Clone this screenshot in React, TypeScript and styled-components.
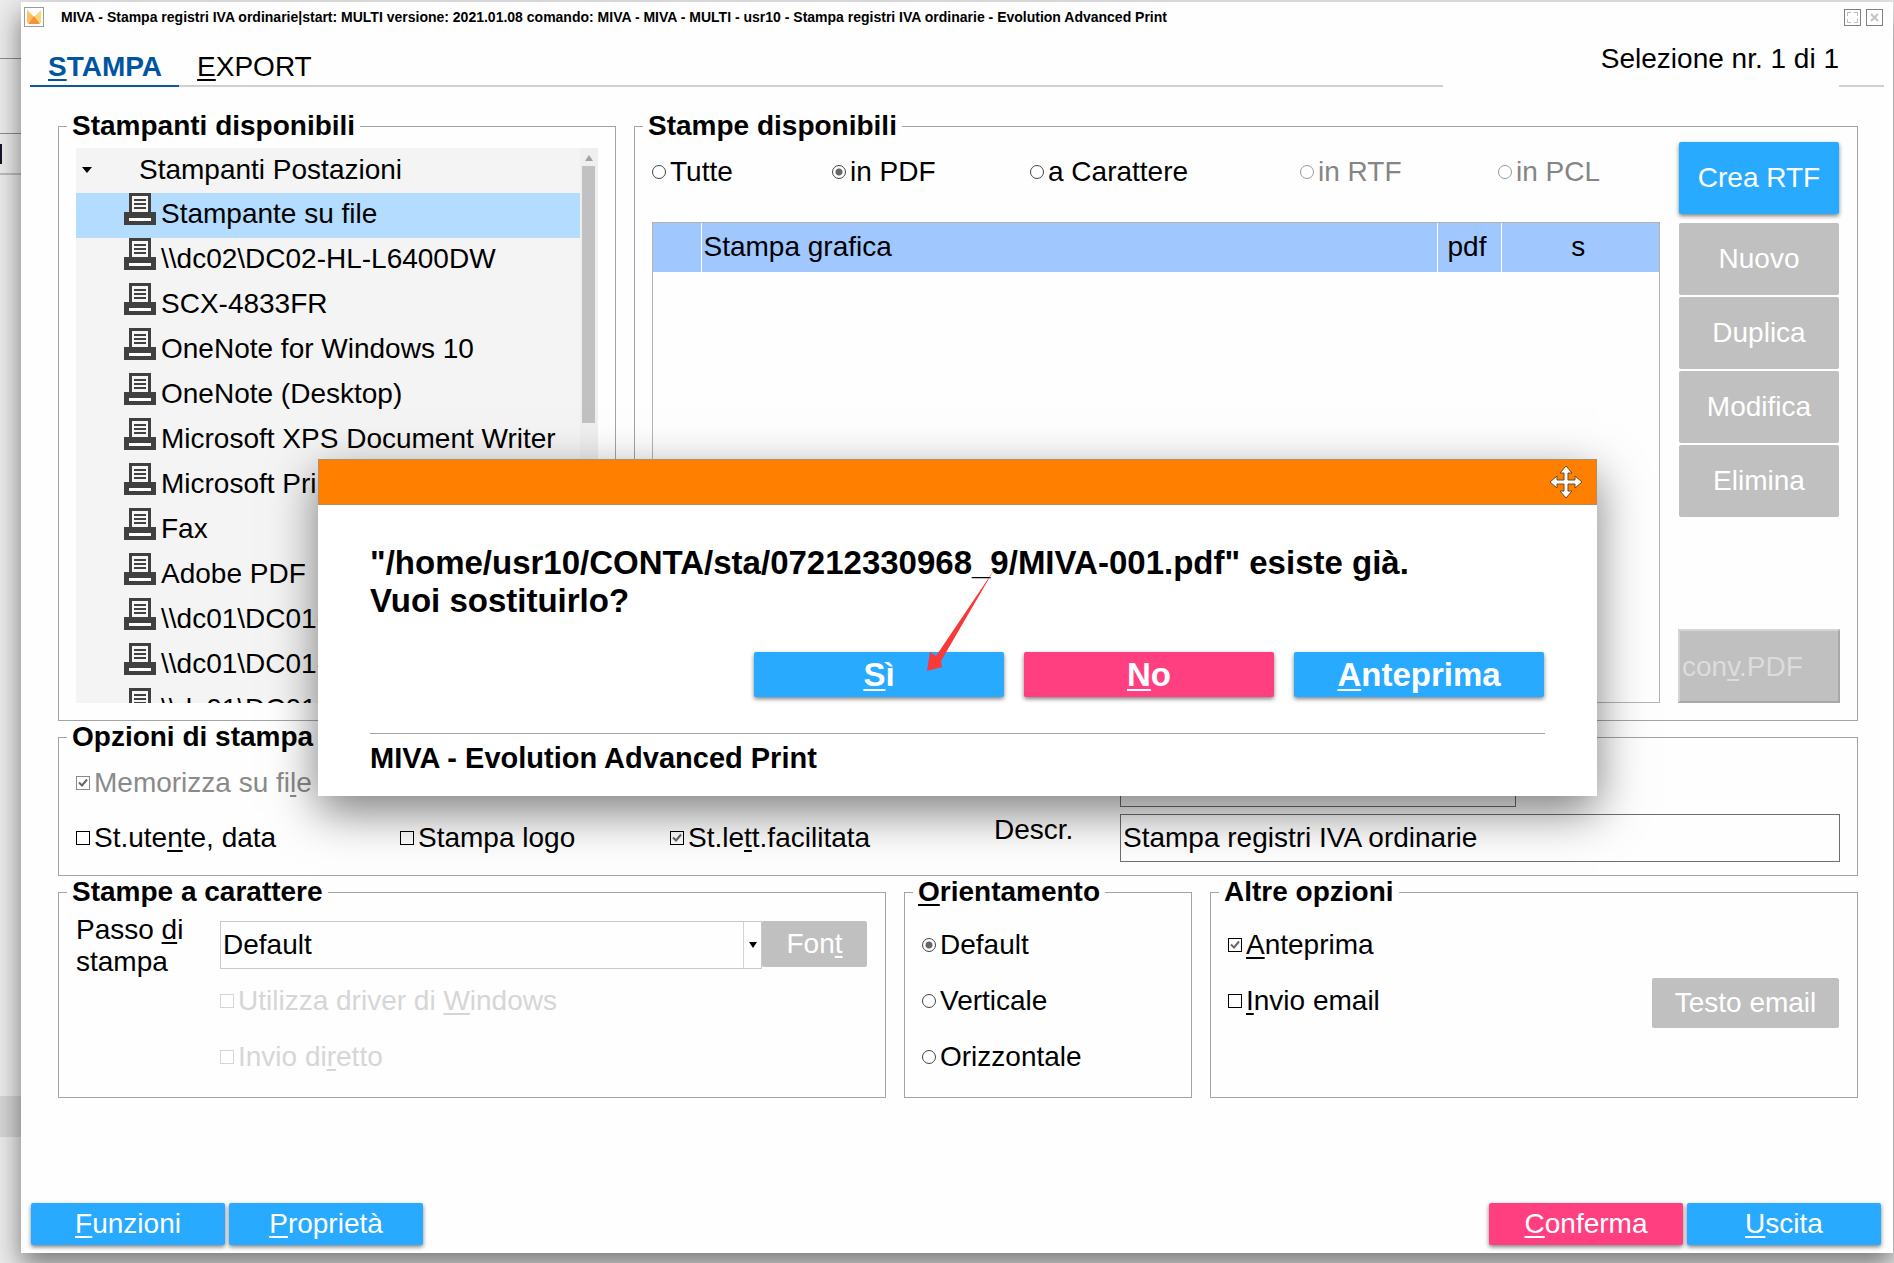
import React, { useState } from 'react';
import styled, { createGlobalStyle, css } from 'styled-components';

const BLUE = '#27aaff';
const PINK = '#ff3f7f';
const GREY = '#c0c0c0';

const GlobalStyle = createGlobalStyle`
  *, *::before, *::after { box-sizing: border-box; }
  html, body, #root { height: 100%; }
  body {
    margin: 0;
    overflow: hidden;
    background: #e9e9e9;
    color: #000;
    font: 28px/32px "Liberation Sans", Arial, sans-serif;
  }
  button, input, select { font: inherit; color: inherit; }
  u { text-decoration-skip-ink: none; text-underline-offset: 3px; text-decoration-thickness: 2px; }
`;

/* ---------- page behind the window ---------- */

const Desktop = styled.div`
  min-height: 100%;
  position: relative;
  padding: 2px 1px 10px 21px;
  display: flex;
  background:
    linear-gradient(#8c8c8c, #8c8c8c) 0 58px / 21px 1px no-repeat,
    linear-gradient(#8c8c8c, #8c8c8c) 0 133px / 21px 1px no-repeat,
    linear-gradient(#15152a, #15152a) 0 144px / 2px 20px no-repeat,
    linear-gradient(#bdbdbd, #bdbdbd) 0 173px / 21px 2px no-repeat,
    linear-gradient(#d6d6d6, #d6d6d6) 0 1096px / 21px 41px no-repeat,
    #ececec;
`;

const Window = styled.main`
  flex: 1;
  min-width: 0;
  display: flex;
  flex-direction: column;
  background: #fefefe;
  box-shadow: 0 12px 26px rgba(0, 0, 0, 0.5);
`;

const TitleBar = styled.header`
  display: flex;
  align-items: center;
  height: 30px;
  padding: 0 10px 0 3px;
  gap: 5px;
`;

const TitleText = styled.h1`
  flex: 1;
  margin: 0 0 0 12px;
  font-size: 14px;
  line-height: 16px;
  white-space: nowrap;
`;

const WindowButton = styled.button`
  width: 17px;
  height: 17px;
  padding: 0;
  border: 1px solid #808080;
  background: #fff;
  display: grid;
  place-items: center;
`;

const TabBar = styled.nav`
  display: flex;
  height: 55px;
  padding: 0 9px;
`;

const Tab = styled.a<{ $active?: boolean }>`
  padding: 19px 17px 0 18px;
  border-bottom: 2px solid ${p => (p.$active ? '#0d5c92' : '#cfd0d0')};
  color: ${p => (p.$active ? '#0055a0' : '#000')};
  font-weight: ${p => (p.$active ? 'bold' : 'normal')};
  text-decoration: none;
`;

const TabLine = styled.div<{ $width?: number }>`
  flex: ${p => (p.$width ? `0 0 ${p.$width}px` : '1')};
  border-bottom: 2px solid #cfd0d0;
`;

const Selection = styled.div`
  flex: 0 0 396px;
  padding-top: 11px;
  text-align: right;
`;

const Panels = styled.div`
  flex: 1;
  display: flex;
  flex-direction: column;
  padding: 23px 35px 0 37px;
`;

const Row = styled.div<{ $cols: string }>`
  display: grid;
  grid-template-columns: ${p => p.$cols};
  column-gap: 18px;
`;

const Group = styled.fieldset<{ $height: number }>`
  min-width: 0;
  min-height: ${p => p.$height}px;
  margin: 0;
  padding: 0 17px;
  border: 1px solid #a3a3a3;
  > legend {
    margin-left: -9px;
    padding: 0 5px;
    font-weight: bold;
  }
`;

/* ---------- buttons ---------- */

const Button = styled.button<{ $tone?: string; $w?: number; $h?: number }>`
  flex: none;
  width: ${p => (p.$w ? `${p.$w}px` : '100%')};
  height: ${p => p.$h ?? 72}px;
  padding: 0;
  border: 0;
  border-radius: 2px;
  background: ${p => p.$tone ?? BLUE};
  color: #fff;
  box-shadow: 0 2px 4px rgba(0, 0, 0, 0.5);
  &:disabled {
    background: ${GREY};
    box-shadow: none;
  }
`;

const ConvButton = styled.button`
  width: 162px;
  height: 74px;
  margin: auto -1px 0;
  padding: 2px 2px 0;
  border: 2px solid;
  border-color: #d4d4d4 #a8a8a8 #a8a8a8 #d4d4d4;
  background: ${GREY};
  text-align: left;
  &:disabled { color: #dcdcdc; }
`;

/* ---------- tick boxes and radios ---------- */

const Choice = styled.label<{ $color?: string }>`
  display: flex;
  align-items: center;
  gap: 4px;
  height: 32px;
  color: ${p => p.$color ?? '#000'};
  white-space: nowrap;
`;

const tick = css`
  background: #fff url("data:image/svg+xml,%3Csvg xmlns='http://www.w3.org/2000/svg' viewBox='0 0 12 12'%3E%3Cpath d='M2 5.5 5 8.5 10 2.5' fill='none' stroke='%23666' stroke-width='2'/%3E%3C/svg%3E") center / 12px 12px no-repeat;
`;

const Mark = styled.input`
  appearance: none;
  flex: none;
  width: 14px;
  height: 14px;
  margin: 0;
  border: 1px solid currentColor;
  background: #fff;
  &[type='radio'] { border-color: #444; border-radius: 50%; }
  &[type='radio']:checked { background: radial-gradient(circle, #666 0 3px, #fff 4px); }
  &[type='radio']:disabled { border-color: #999; }
  &[type='checkbox']:checked { ${tick} }
`;

type OptionProps = {
  type: 'radio' | 'checkbox';
  name?: string;
  on?: boolean;
  off?: boolean;
  color?: string;
  children: React.ReactNode;
};

function Option({ type, name, on, off, color, children }: OptionProps) {
  return (
    <Choice $color={color}>
      <Mark type={type} name={name} defaultChecked={on} disabled={off} />
      <span>{children}</span>
    </Choice>
  );
}

/* ---------- printers tree ---------- */

const Tree = styled.div`
  display: flex;
  height: 555px;
  margin: 6px 0 0;
  background: #f4f4f4;
  overflow: hidden;
`;

const TreeList = styled.ul`
  flex: 1;
  min-width: 0;
  margin: 0;
  padding: 0;
  list-style: none;
`;

const TreeHead = styled.li`
  display: flex;
  align-items: center;
  gap: 47px;
  height: 45px;
  padding: 0 6px 2px;
`;

const TreeItem = styled.li<{ $selected?: boolean }>`
  display: flex;
  gap: 5px;
  height: 45px;
  padding-left: 48px;
  background: ${p => (p.$selected ? '#b3dcff' : 'transparent')};
  line-height: 42px;
  white-space: nowrap;
`;

const Scrollbar = styled.div`
  flex: 0 0 18px;
  padding: 7px 3px 0 2px;
  display: flex;
  flex-direction: column;
  align-items: center;
  gap: 5px;
  background: #efefef;
`;

const Thumb = styled.div`
  width: 13px;
  height: 257px;
  background: #c1c1c1;
`;

/* ---------- prints ---------- */

const Prints = styled.div`
  display: grid;
  grid-template-columns: 1fr 160px;
  column-gap: 19px;
  padding-right: 1px;
`;

const PrintFilter = styled.div`
  display: grid;
  grid-template-columns: 180fr 198fr 270fr 198fr 162fr;
  padding: 14px 0 34px;
`;

const TableFrame = styled.div`
  height: 481px;
  border: 1px solid #b4b4b4;
`;

const Table = styled.table`
  width: 100%;
  border-collapse: collapse;
  table-layout: fixed;
  td {
    height: 49px;
    padding: 0 6px 2px 2px;
    background: #a1c7ff;
    text-align: center;
  }
  td + td { border-left: 1px solid #fff; }
  td:nth-child(1) { width: 48px; }
  td:nth-child(2) { text-align: left; }
  td:nth-child(3) { width: 64px; }
  td:nth-child(4) { width: 158px; }
`;

const Actions = styled.div`
  display: flex;
  flex-direction: column;
  gap: 2px;
  height: 561px;
  > :first-child { margin-bottom: 7px; }
`;

/* ---------- option groups ---------- */

const OptionGrid = styled.div`
  display: grid;
  grid-template-columns: 324fr 270fr 324fr 126fr 720fr;
  grid-template-rows: 48px 48px;
  row-gap: 7px;
  align-items: center;
  padding-top: 6px;
`;

const FieldLabel = styled.label`
  align-self: start;
`;

const Field = styled.input<{ $short?: boolean }>`
  width: ${p => (p.$short ? '55%' : '100%')};
  height: 48px;
  padding: 0 2px;
  border: 1px solid #6e6e6e;
  border-radius: 0;
  background: transparent;
`;

const CharGrid = styled.div`
  display: grid;
  grid-template-columns: 144px 1fr 105px;
  grid-template-rows: 48px auto;
  padding: 13px 1px 0 0;
`;

const StepLabel = styled.label`
  margin-top: -7px;
  width: 120px;
`;

const SelectBox = styled.div`
  display: grid;
  grid-template-columns: 1fr 18px;
  border: 1px solid #c9c9c9;
`;

const Select = styled.select`
  appearance: none;
  grid-area: 1 / 1 / 2 / 3;
  width: 100%;
  padding: 0 2px;
  border: 0;
  background: transparent;
`;

const SelectArrow = styled.span`
  grid-area: 1 / 2 / 2 / 3;
  display: grid;
  place-items: center;
  border-left: 1px solid #d4d4d4;
  pointer-events: none;
`;

const Stack = styled.div<{ $top: number; $bottom?: number }>`
  grid-column: 2 / 4;
  display: flex;
  flex-direction: column;
  gap: 24px;
  padding: ${p => p.$top}px 0 ${p => p.$bottom ?? 0}px;
`;

const OtherOptions = styled.div`
  display: flex;
  justify-content: space-between;
  align-items: flex-end;
  padding-right: 1px;
`;

const Footer = styled.footer`
  display: flex;
  gap: 4px;
  padding: 0 12px 8px 10px;
  > :nth-child(3) { margin-left: auto; }
`;

/* ---------- confirmation dialog ---------- */

const Dialog = styled.section`
  position: absolute;
  left: 318px;
  right: 297px;
  top: 459px;
  background: #fff;
  box-shadow: 0 16px 44px rgba(0, 0, 0, 0.5);
  font-weight: bold;
`;

const DialogBar = styled.div`
  display: flex;
  justify-content: flex-end;
  align-items: center;
  height: 46px;
  padding-right: 14px;
  border: 1px solid #b58d63;
  background: #ff8000;
`;

const DialogBody = styled.div`
  padding: 39px 52px 13px;
`;

const Message = styled.p`
  margin: 0;
  font-size: 33px;
  line-height: 38px;
`;

const DialogButtons = styled.div`
  display: flex;
  justify-content: flex-end;
  gap: 20px;
  padding: 32px 1px 36px 0;
  font-size: 33px;
  button { font-weight: bold; }
`;

const DialogFoot = styled.p`
  margin: 0;
  padding: 8px 0 9px;
  border-top: 1px solid #a3a3a3;
  font-size: 29px;
`;

const Pointer = styled.svg`
  position: absolute;
  left: 608px;
  top: 110px;
  width: 70px;
  height: 104px;
  pointer-events: none;
`;

/* ---------- drawings ---------- */

const Logo = () => (
  <svg width="20" height="20" viewBox="0 0 20 20">
    <rect x=".5" y=".5" width="19" height="19" fill="#fff" stroke="#9a9a9a" />
    <path d="M3 3l7 7 7-7v13H3z" fill="#ffd37a" />
    <path d="M3 3l7 7-7 6z" fill="#ffc160" />
    <path d="M10 9l6 8H4z" fill="#f5923a" />
  </svg>
);

const PrinterSvg = styled.svg`
  flex: none;
`;

const Printer = () => (
  <PrinterSvg width="32" height="32" viewBox="0 0 32 32">
    <path d="M6.500 20V1.500h19V20" fill="#f6f6f6" stroke="#404040" strokeWidth="3" />
    <path d="M10 7h12M10 11h12M10 15h12" stroke="#404040" strokeWidth="2" />
    <path d="M0 19h32v13H0z" fill="#404040" />
    <path d="M5 25h22v3H5z" fill="#fff" />
  </PrinterSvg>
);

const Caret = ({ w = 10, up = false, color = '#000' }) => (
  <svg width={w} height="6" viewBox="0 0 10 6" preserveAspectRatio="none">
    <path d={up ? 'M0 6h10L5 0z' : 'M0 0h10L5 6z'} fill={color} />
  </svg>
);

const MoveIcon = () => (
  <svg width="32" height="32" viewBox="0 0 32 32">
    <path
      d="M16 0l6 7h-4v7h7v-4l7 6-7 6v-4h-7v7h4l-6 7-6-7h4v-7H7v4l-7-6 7-6v4h7V7h-4z"
      fill="#fff"
      stroke="#6b4a20"
      strokeWidth="1"
    />
  </svg>
);

const printers = [
  'Stampante su file',
  '\\\\dc02\\DC02-HL-L6400DW',
  'SCX-4833FR',
  'OneNote for Windows 10',
  'OneNote (Desktop)',
  'Microsoft XPS Document Writer',
  'Microsoft Print to PDF',
  'Fax',
  'Adobe PDF',
  '\\\\dc01\\DC01-',
  '\\\\dc01\\DC01-',
  '\\\\dc01\\DC01-',
];

export default function App() {
  const [descr, setDescr] = useState('Stampa registri IVA ordinarie');
  return (
    <Desktop>
      <GlobalStyle />
      <Window>
        <TitleBar>
          <Logo />
          <TitleText>
            MIVA - Stampa registri IVA ordinarie|start: MULTI versione: 2021.01.08 comando: MIVA - MIVA - MULTI - usr10 - Stampa registri IVA ordinarie - Evolution Advanced Print
          </TitleText>
          <WindowButton aria-label="Ingrandisci">
            <svg width="11" height="11" viewBox="0 0 11 11" fill="none" stroke="#bbb">
              <path d="M.5 4V.5H4M7 .5h3.500V4M10.500 7v3.500H7M4 10.500H.5V7" />
            </svg>
          </WindowButton>
          <WindowButton aria-label="Chiudi">
            <svg width="9" height="9" viewBox="0 0 9 9" stroke="#c4c4c4" strokeWidth="2">
              <path d="M1 1l7 7M8 1L1 8" />
            </svg>
          </WindowButton>
        </TitleBar>
        <TabBar>
          <Tab href="#stampa" $active><u>S</u>TAMPA</Tab>
          <Tab href="#export"><u>E</u>XPORT</Tab>
          <TabLine />
          <Selection>Selezione nr. 1 di 1</Selection>
          <TabLine $width={45} />
        </TabBar>
        <Panels>
          <Row $cols="558fr 1224fr">
            <Group $height={611}>
              <legend>Stampanti disponibili</legend>
              <Tree>
                <TreeList>
                  <TreeHead><Caret />Stampanti Postazioni</TreeHead>
                  {printers.map((name, i) => (
                    <TreeItem key={i} $selected={i === 0}>
                      <Printer />
                      {name}
                    </TreeItem>
                  ))}
                </TreeList>
                <Scrollbar>
                  <Caret w={8} up color="#a3a3a3" />
                  <Thumb />
                </Scrollbar>
              </Tree>
            </Group>
            <Group $height={611}>
              <legend>Stampe disponibili</legend>
              <Prints>
                <div>
                  <PrintFilter>
                    <Option type="radio" name="print">Tutte</Option>
                    <Option type="radio" name="print" on>in PDF</Option>
                    <Option type="radio" name="print">a Carattere</Option>
                    <Option type="radio" name="print" off color="#858585">in RTF</Option>
                    <Option type="radio" name="print" off color="#858585">in PCL</Option>
                  </PrintFilter>
                  <TableFrame>
                    <Table>
                      <tbody>
                        <tr><td /><td>Stampa grafica</td><td>pdf</td><td>s</td></tr>
                      </tbody>
                    </Table>
                  </TableFrame>
                </div>
                <Actions>
                  <Button>Crea RTF</Button>
                  <Button disabled>Nuovo</Button>
                  <Button disabled>Duplica</Button>
                  <Button disabled>Modifica</Button>
                  <Button disabled>Elimina</Button>
                  <ConvButton disabled>con<u>v</u>.PDF</ConvButton>
                </Actions>
              </Prints>
            </Group>
          </Row>
          <Group $height={155}>
            <legend>Opzioni di stampa</legend>
            <OptionGrid>
              <Option type="checkbox" on off color="#8a8a8a">Memorizza su fi<u>l</u>e</Option>
              <span />
              <span />
              <span />
              <Field $short aria-label="Nome" />
              <Option type="checkbox">St.ute<u>n</u>te, data</Option>
              <Option type="checkbox">Stampa logo</Option>
              <Option type="checkbox" on>St.le<u>t</u>t.facilitata</Option>
              <FieldLabel htmlFor="descr">Descr.</FieldLabel>
              <Field id="descr" value={descr} onChange={e => setDescr(e.target.value)} />
            </OptionGrid>
          </Group>
          <Row $cols="828fr 288fr 648fr">
            <Group $height={222}>
              <legend>Stampe a carattere</legend>
              <CharGrid>
                <StepLabel htmlFor="step">Passo <u>d</u>i stampa</StepLabel>
                <SelectBox>
                  <Select id="step"><option>Default</option></Select>
                  <SelectArrow><Caret w={8} /></SelectArrow>
                </SelectBox>
                <Button disabled $h={46}>Fon<u>t</u></Button>
                <Stack $top={16}>
                  <Option type="checkbox" off color="#d6d6d6">Utilizza driver di <u>W</u>indows</Option>
                  <Option type="checkbox" off color="#d6d6d6">Invio di<u>r</u>etto</Option>
                </Stack>
              </CharGrid>
            </Group>
            <Group $height={222}>
              <legend><u>O</u>rientamento</legend>
              <Stack $top={21}>
                <Option type="radio" name="orient" on>Default</Option>
                <Option type="radio" name="orient">Verticale</Option>
                <Option type="radio" name="orient">Orizzontale</Option>
              </Stack>
            </Group>
            <Group $height={222}>
              <legend>Altre opzioni</legend>
              <OtherOptions>
                <Stack $top={21} $bottom={11}>
                  <Option type="checkbox" on><u>A</u>nteprima</Option>
                  <Option type="checkbox"><u>I</u>nvio email</Option>
                </Stack>
                <Button disabled $w={187} $h={50}>Testo email</Button>
              </OtherOptions>
            </Group>
          </Row>
        </Panels>
        <Footer>
          <Button $w={194} $h={42}><u>F</u>unzioni</Button>
          <Button $w={194} $h={42}><u>P</u>roprietà</Button>
          <Button $w={194} $h={42} $tone={PINK}><u>C</u>onferma</Button>
          <Button $w={194} $h={42}><u>U</u>scita</Button>
        </Footer>
      </Window>
      <Dialog role="dialog" aria-label="MIVA">
        <DialogBar><MoveIcon /></DialogBar>
        <DialogBody>
          <Message>
            "/home/usr10/CONTA/sta/07212330968_9/MIVA-001.pdf" esiste già.
            <br />
            Vuoi sostituirlo?
          </Message>
          <DialogButtons>
            <Button $w={250} $h={45}><u>S</u>ì</Button>
            <Button $w={250} $h={45} $tone={PINK}><u>N</u>o</Button>
            <Button $w={250} $h={45}><u>A</u>nteprima</Button>
          </DialogButtons>
          <DialogFoot>MIVA - Evolution Advanced Print</DialogFoot>
        </DialogBody>
        <Pointer viewBox="0 0 70 104">
          <path d="M68 1L15 92l1 6L1 102 4 83l6 4z" fill="#f93838" />
        </Pointer>
      </Dialog>
    </Desktop>
  );
}
